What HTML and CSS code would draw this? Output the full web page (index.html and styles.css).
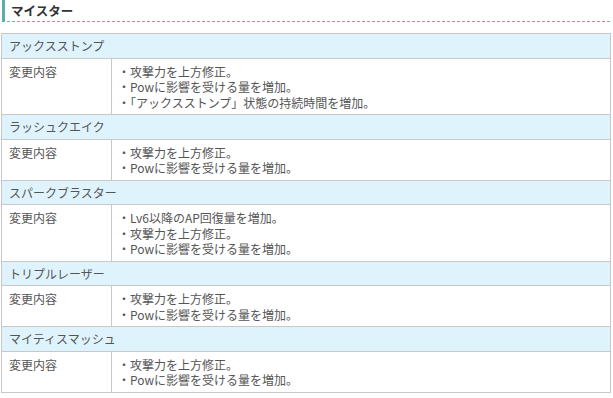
FILE: index.html
```html
<!DOCTYPE html>
<html lang="ja">
<head>
<meta charset="utf-8">
<link rel="stylesheet" href="styles.css">
</head>
<body>
<div class="page">
  <h2 class="title">マイスター</h2>
  <table class="changes">
    <tr><th colspan="2" class="skill">アックスストンプ</th></tr>
    <tr><td class="label">変更内容</td><td class="desc">・攻撃力を上方修正。<br>・Powに影響を受ける量を増加。<br>・「アックスストンプ」状態の持続時間を増加。</td></tr>
    <tr><th colspan="2" class="skill">ラッシュクエイク</th></tr>
    <tr><td class="label">変更内容</td><td class="desc">・攻撃力を上方修正。<br>・Powに影響を受ける量を増加。</td></tr>
    <tr><th colspan="2" class="skill">スパークブラスター</th></tr>
    <tr><td class="label">変更内容</td><td class="desc">・Lv6以降のAP回復量を増加。<br>・攻撃力を上方修正。<br>・Powに影響を受ける量を増加。</td></tr>
    <tr><th colspan="2" class="skill">トリプルレーザー</th></tr>
    <tr><td class="label">変更内容</td><td class="desc">・攻撃力を上方修正。<br>・Powに影響を受ける量を増加。</td></tr>
    <tr><th colspan="2" class="skill">マイティスマッシュ</th></tr>
    <tr><td class="label">変更内容</td><td class="desc">・攻撃力を上方修正。<br>・Powに影響を受ける量を増加。</td></tr>
  </table>
</div>
</body>
</html>
```
FILE: styles.css
```css
html, body {
  margin: 0;
  padding: 0;
  background: #fff;
}
.page {
  padding: 0 3px 0 1px;
  font-family: "Noto Sans CJK JP", "Noto Sans", sans-serif;
  color: #555;
  font-size: 12px;
}
.title {
  margin: 0 0 11px 1px;
  height: 21px;
  line-height: 22px;
  padding-left: 6px;
  border-left: 3px solid #5aaeb0;
  border-bottom: 1px dashed #6ab4b8;
  font-size: 12.5px;
  font-weight: bold;
  color: #333;
}
.changes {
  width: 610px;
  border-collapse: collapse;
  border: 1px solid #c8c8c8;
}
.changes th, .changes td {
  border: 1px solid #c8c8c8;
  text-align: left;
  vertical-align: top;
  font-weight: normal;
  line-height: 15.5px;
}
.skill {
  background: #dff3fc;
  padding: 4px 7px;
}
.label {
  width: 95px;
  padding: 5px 7px 4px;
}
.desc {
  padding: 5px 4px 4px 6px;
}
```
